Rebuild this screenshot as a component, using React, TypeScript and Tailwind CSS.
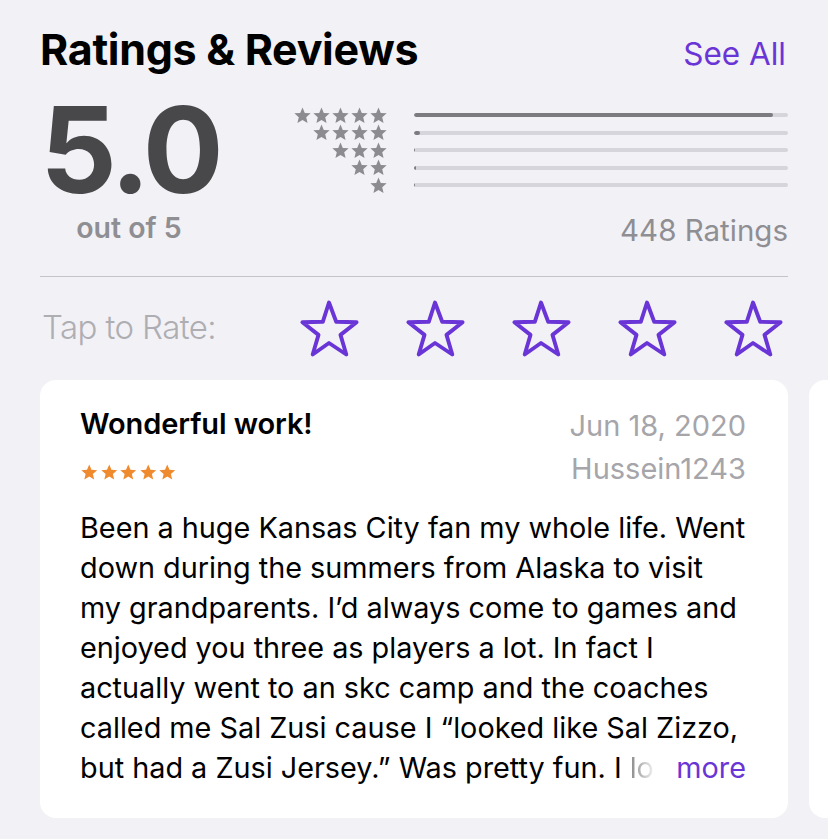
import React from "react";

const PURPLE = "#6a35d6";

const histogram = [
  { stars: 5, pct: 96 },
  { stars: 4, pct: 1.5 },
  { stars: 3, pct: 0.4 },
  { stars: 2, pct: 0.6 },
  { stars: 1, pct: 0.4 },
];

const reviewLines = [
  "Been a huge Kansas City fan my whole life. Went",
  "down during the summers from Alaska to visit",
  "my grandparents. I\u2019d always come to games and",
  "enjoyed you three as players a lot. In fact I",
  "actually went to an skc camp and the coaches",
  "called me Sal Zusi cause I \u201clooked like Sal Zizzo,",
];

function SolidStar({ size, color }: { size: number; color: string }) {
  return (
    <svg width={size} height={size} viewBox="0 0 24 24" aria-hidden="true">
      <path
        d="M12 1.8l2.9 6.9 7.4.6-5.6 4.9 1.7 7.3L12 17.6l-6.4 3.9 1.7-7.3-5.6-4.9 7.4-.6z"
        fill={color}
      />
    </svg>
  );
}

function OutlineStar() {
  return (
    <svg width="62" height="60" viewBox="0 0 62 60" aria-hidden="true">
      <path
        d="M31 3.5l7.2 19.3 20.4.5-16.1 12.6 5.8 19.6L31 44 14.7 55.5l5.8-19.6L4.4 23.3l20.4-.5z"
        fill="none"
        stroke={PURPLE}
        strokeWidth="3.9"
        strokeLinejoin="round"
      />
    </svg>
  );
}

export default function App() {
  return (
    <div
      className="w-[828px] h-[839px] overflow-hidden bg-[#f2f1f6]"
      style={{ fontFamily: "Inter, 'Noto Sans', sans-serif" }}
    >
      <div className="px-10 pt-[22px]">
        {/* ── Header ─────────────────────────────── */}
        <div className="flex items-baseline justify-between h-[54px]">
          <h1 className="text-[43px] font-bold tracking-[-0.3px] text-black leading-[54px]">
            Ratings &amp; Reviews
          </h1>
          <span className="text-[31.5px] text-[#6a35d6] mr-[2px]">See All</span>
        </div>

        {/* ── Summary ─────────────────────────────── */}
        <div className="flex mt-[14px]">
          <div className="flex flex-col items-center w-[180px]">
            <span className="text-[120px] font-bold leading-[120px] tracking-[-4px] text-[#48484a]">
              5.0
            </span>
            <span className="text-[28.5px] font-semibold text-[#8e8e93] leading-[34px] mt-[1px] ml-[-2px]">
              out of 5
            </span>
          </div>

          <div className="flex-1 flex flex-col pl-[72px] pt-[18px]">
            <div className="flex flex-col gap-[3.5px]">
              {histogram.map((row) => (
                <div key={row.stars} className="flex items-center h-[14px]">
                  <div className="w-[96px] flex justify-end">
                    {Array.from({ length: row.stars }).map((_, i) => (
                      <SolidStar key={i} size={19} color="#8b8b90" />
                    ))}
                  </div>
                  <div className="flex-1 ml-[26px] h-[4px] rounded-full bg-[#d6d5db] overflow-hidden">
                    <div
                      className="h-full rounded-full bg-[#7c7b80]"
                      style={{ width: `${row.pct}%` }}
                    />
                  </div>
                </div>
              ))}
            </div>
            <div className="text-right text-[29.5px] text-[#8e8e93] mt-[21px] leading-[34px]">
              448 Ratings
            </div>
          </div>
        </div>

        {/* ── Divider ─────────────────────────────── */}
        <div className="h-px bg-[#c4c3c9] mt-[29px]" />

        {/* ── Tap to Rate ─────────────────────────── */}
        <div className="flex items-center h-[102px]">
          <span className="text-[33px] font-light text-[#aeaeb2] ml-[2px] tracking-[-0.6px] w-[256px]">
            Tap to Rate:
          </span>
          <div className="flex gap-[44px] mt-[2px]">
            {[0, 1, 2, 3, 4].map((i) => (
              <OutlineStar key={i} />
            ))}
          </div>
        </div>

        {/* ── Review cards ────────────────────────── */}
        <div className="flex gap-[21px] mt-[1px]">
          <div className="w-[748px] shrink-0 h-[438px] bg-white rounded-[16px] pl-10 pr-[42px] pt-[24px]">
            <div className="flex justify-between">
              <div className="flex flex-col">
                <span className="text-[29px] font-semibold text-black leading-[40px] tracking-[-0.1px]">
                  Wonderful work!
                </span>
                <div className="flex mt-[19px] gap-[1px]">
                  {[0, 1, 2, 3, 4].map((i) => (
                    <SolidStar key={i} size={18.5} color="#ef8a2e" />
                  ))}
                </div>
              </div>
              <div className="flex flex-col items-end text-[29px] text-[#a5a5aa] leading-[43px]">
                <span>Jun 18, 2020</span>
                <span>Hussein1243</span>
              </div>
            </div>

            <div className="mt-[18px] text-[28.8px] text-black leading-[40px] whitespace-nowrap">
              {reviewLines.map((line) => (
                <div key={line}>{line}</div>
              ))}
              <div className="flex items-baseline">
                <span>but had a Zusi Jersey.&#8221; Was pretty fun. I</span>
                <span className="ml-[8px] bg-gradient-to-r from-[#8a8a8a] to-[#f2f2f2] bg-clip-text text-transparent">
                  lo
                </span>
                <span className="ml-auto text-[#6a35d6]">more</span>
              </div>
            </div>
          </div>
          <div className="w-[748px] shrink-0 h-[438px] bg-white rounded-[16px]" />
        </div>
      </div>
    </div>
  );
}
